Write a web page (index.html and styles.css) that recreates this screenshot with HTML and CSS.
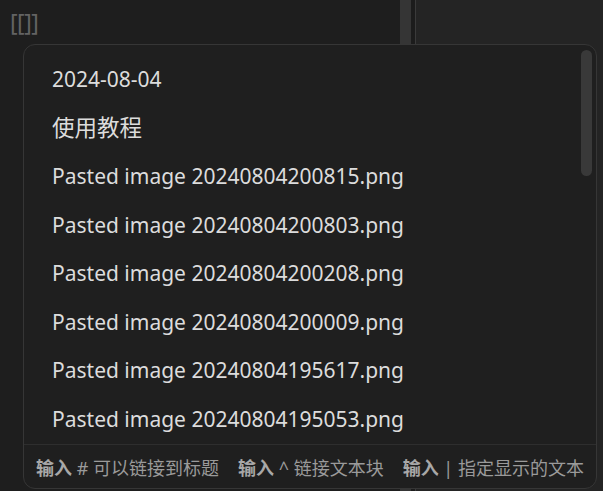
FILE: index.html
```html
<!DOCTYPE html>
<html lang="zh">
<head>
<meta charset="utf-8">
<link rel="stylesheet" href="styles.css">
</head>
<body>
<div class="app">
  <div class="editor">
    <div class="line">[[]]</div>
  </div>
  <div class="vscroll"></div>
  <div class="gap"></div>
  <div class="side"></div>

  <div class="popup">
    <div class="list">
      <div class="item">2024-08-04</div>
      <div class="item cjk">使用教程</div>
      <div class="item">Pasted image 20240804200815.png</div>
      <div class="item">Pasted image 20240804200803.png</div>
      <div class="item">Pasted image 20240804200208.png</div>
      <div class="item">Pasted image 20240804200009.png</div>
      <div class="item">Pasted image 20240804195617.png</div>
      <div class="item">Pasted image 20240804195053.png</div>
    </div>
    <div class="thumb"></div>
    <div class="footer">
      <span class="hint"><b>输入</b> # 可以链接到标题</span>
      <span class="hint"><b>输入</b> ^ 链接文本块</span>
      <span class="hint"><b>输入</b> | 指定显示的文本</span>
    </div>
  </div>
</div>
</body>
</html>
```

FILE: styles.css
```css
* { box-sizing: border-box; }
html, body {
  margin: 0;
  padding: 0;
  width: 603px;
  height: 491px;
  overflow: hidden;
  background: #1e1e1e;
  font-family: "Noto Sans", "Noto Sans CJK SC", sans-serif;
}
.app {
  position: relative;
  display: flex;
  width: 603px;
  height: 491px;
}
.editor {
  width: 400px;
  background: #1e1e1e;
  padding: 7px 0 0 10px;
}
.line {
  color: #636363;
  font-size: 23px;
  line-height: 30px;
  font-family: "Noto Sans", sans-serif;
  letter-spacing: -0.5px;
}
.vscroll {
  width: 11px;
  background: #353535;
}
.gap {
  width: 5px;
  background: #1c1c1c;
  border-right: 1px solid #3a3a3a;
}
.side {
  flex: 1;
  background: #242424;
}
.popup {
  position: absolute;
  left: 23px;
  top: 44px;
  width: 574px;
  height: 445px;
  background: #1f1f1f;
  border: 1px solid #363636;
  border-radius: 12px;
  display: flex;
  flex-direction: column;
  overflow: hidden;
}
.list {
  padding: 10px 0 0 28px;
  flex: none;
  height: 399px;
}
.item {
  height: 48.5px;
  line-height: 48px;
  font-size: 21px;
  color: #dcdcdc;
  white-space: nowrap;
}
.item.cjk {
  font-size: 22.5px;
}
.thumb {
  position: absolute;
  right: 4px;
  top: 5px;
  width: 11px;
  height: 126px;
  border-radius: 6px;
  background: #393939;
}
.footer {
  border-top: 1px solid #2e2e2e;
  display: flex;
  gap: 19px;
  padding: 1px 0 0 12px;
  height: 45px;
  align-items: center;
  font-size: 18px;
  color: #9a9a9a;
  white-space: nowrap;
}
.hint b {
  font-weight: 700;
  color: #a8a8a8;
}
```
